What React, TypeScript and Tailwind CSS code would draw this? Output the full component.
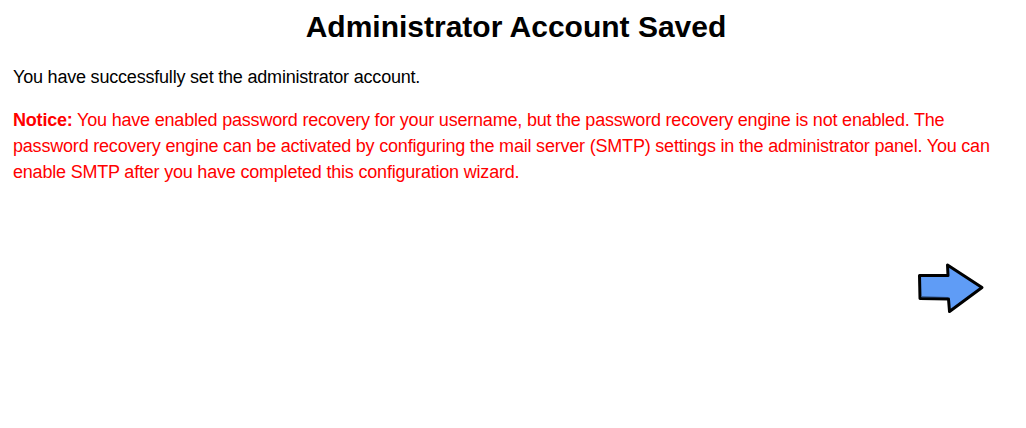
export default function App() {
  return (
    <div className="min-h-screen bg-white font-['Liberation_Sans',Arial,sans-serif] text-black">
      <h1 className="pt-[9px] text-center text-[30px] font-bold leading-[36px] pl-[6px]">
        Administrator Account Saved
      </h1>
      <div className="px-[13px] pr-[30px] text-[18px] leading-[26px] tracking-[-0.2px]">
        <p className="mt-[19px]">You have successfully set the administrator account.</p>
        <p className="mt-[17px] text-[#ff0000]">
          <b>Notice:</b> You have enabled password recovery for your username, but the password
          recovery engine is not enabled. The password recovery engine can be activated by
          configuring the mail server (SMTP) settings in the administrator panel. You can enable
          SMTP after you have completed this configuration wizard.
        </p>
      </div>
      <div className="mt-[78px] flex justify-end pr-[41px]">
        <NextArrow />
      </div>
    </div>
  );
}

function NextArrow() {
  return (
    <svg width="68" height="52" viewBox="0 0 68 52" aria-label="Next">
      <path
        d="M2.5 12.5 L31 12.5 L30.5 2 L65 24.5 L32.5 48.5 L31.5 36 L3 35.5 Z"
        fill="#5f9cf6"
        stroke="#000"
        strokeWidth="3"
        strokeLinejoin="round"
      />
      <path d="M5 33.5 L31 34.5" stroke="#1a2a4a" strokeWidth="1" opacity="0.5" />
    </svg>
  );
}
